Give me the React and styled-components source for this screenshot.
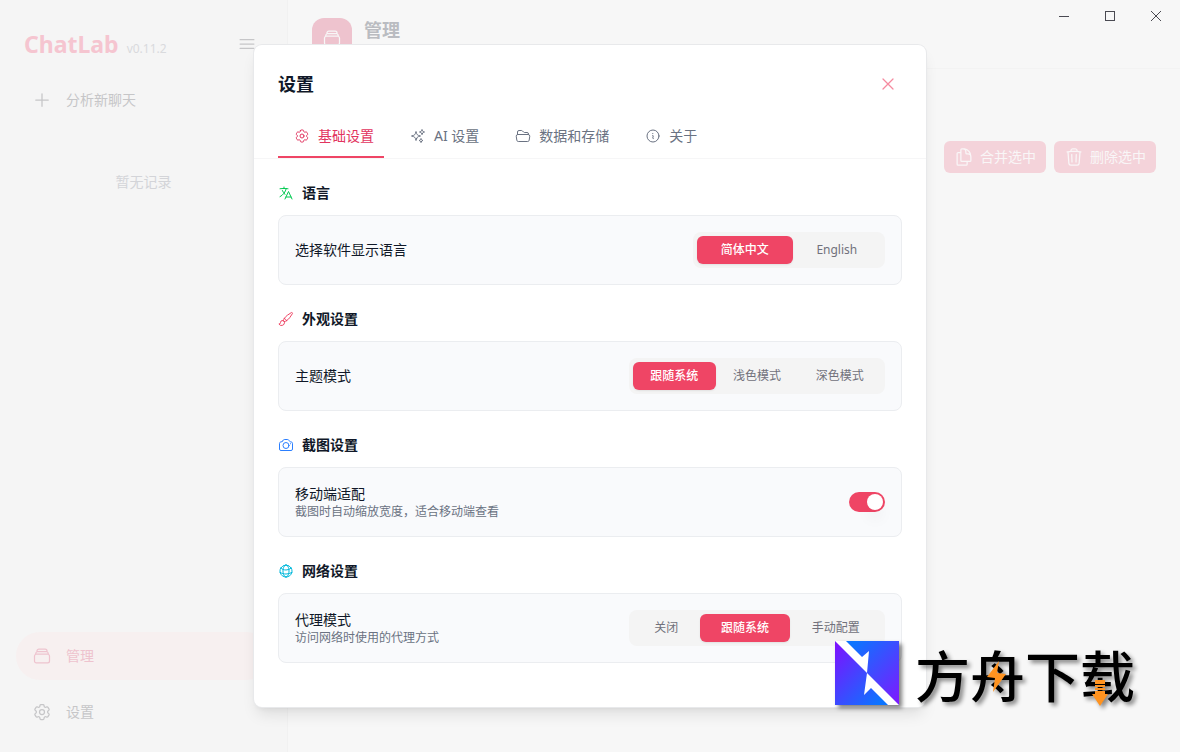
import { useState } from "react";
import styled, { createGlobalStyle } from "styled-components";
import {
  HiOutlineBars3,
  HiOutlineCamera,
  HiOutlineCog6Tooth,
  HiOutlineDocumentDuplicate,
  HiOutlineFolderOpen,
  HiOutlineGlobeAlt,
  HiOutlineInformationCircle,
  HiOutlineLanguage,
  HiOutlinePaintBrush,
  HiOutlinePlus,
  HiOutlineRectangleStack,
  HiOutlineSparkles,
  HiOutlineTrash,
  HiOutlineXMark,
} from "react-icons/hi2";

const GlobalStyle = createGlobalStyle`
  *,
  *::before,
  *::after {
    box-sizing: border-box;
  }

  body {
    margin: 0;
    background-color: #f7f7f7;
    font-family: "Noto Sans", "Noto Sans CJK SC", sans-serif;
    font-size: 14px;
    line-height: 20px;
  }

  h1,
  h2,
  h3,
  p {
    margin: 0;
  }

  button {
    padding: 0;
    border: none;
    background: none;
    color: inherit;
    font: inherit;
    cursor: pointer;
  }

  svg {
    display: block;
    flex-shrink: 0;
  }
`;

/* ---------- page behind the dialog ---------- */

const StyledApp = styled.div`
  position: relative;
  display: flex;
  min-height: 100vh;
`;

const StyledSidebar = styled.aside`
  display: flex;
  flex-direction: column;
  flex: 0 0 288px;
  padding: 28px 0 16px;
  border-right: 1px solid #f1f1f1;
  background-color: #f5f5f5;
`;

const StyledBrandRow = styled.div`
  display: flex;
  align-items: center;
  justify-content: space-between;
  height: 32px;
  padding: 0 24px;
`;

const StyledBrand = styled.h1`
  display: flex;
  align-items: baseline;
  gap: 8px;
  color: #f5c5d0;
  font-size: 23px;
  font-weight: 700;
  line-height: 32px;
`;

const StyledVersion = styled.span`
  color: #d9dadd;
  font-size: 12px;
  font-weight: 400;
  line-height: 16px;
`;

const StyledMenuButton = styled.button`
  display: grid;
  place-items: center;
  width: 32px;
  height: 32px;
  color: #c6c6c8;
`;

const StyledNav = styled.nav`
  display: flex;
  flex-direction: column;
  gap: 8px;
  padding: ${(props) => (props.$top ? "16px 16px 0" : "0 16px")};
`;

const StyledNavItem = styled.button`
  display: flex;
  align-items: center;
  gap: 14px;
  height: 48px;
  padding: 0 16px;
  border-radius: 24px;
  background-color: ${(props) => (props.$active ? "#f7f0f0" : "transparent")};
  color: ${(props) => (props.$active ? "#eec3ce" : "#c6c6c8")};
`;

const StyledEmpty = styled.p`
  flex: 1;
  padding-top: 48px;
  color: #d3d4d8;
  text-align: center;
`;

const StyledMain = styled.main`
  flex: 1;
  min-width: 0;
`;

const StyledPageHeader = styled.header`
  display: flex;
  gap: 12px;
  padding: 18px 24px 10px;
  border-bottom: 1px solid #f3f3f3;
`;

const StyledPageIcon = styled.span`
  display: grid;
  place-items: center;
  width: 40px;
  height: 40px;
  border-radius: 12px;
  background-color: #eec3ce;
  color: #f7f7f7;
`;

const StyledPageTitle = styled.h2`
  color: #babcc1;
  font-size: 18px;
  font-weight: 700;
  line-height: 24px;
`;

const StyledToolbar = styled.div`
  display: flex;
  justify-content: flex-end;
  gap: 8px;
  padding: 72px 24px 0;
`;

const StyledToolbarButton = styled.button`
  display: flex;
  align-items: center;
  gap: 6px;
  height: 32px;
  padding: 0 10px;
  border-radius: 6px;
  background-color: #f4d3da;
  color: #f9f6f7;
`;

const StyledWindowControls = styled.div`
  position: absolute;
  top: 0;
  right: 0;
  display: flex;
  padding-right: 1px;
`;

const StyledWindowButton = styled.button`
  display: grid;
  place-items: center;
  width: 46px;
  height: 32px;
  color: #4a4a52;
`;

/* ---------- settings dialog ---------- */

const StyledOverlay = styled.div`
  position: absolute;
  inset: 0;
  display: flex;
  align-items: center;
  justify-content: center;
  pointer-events: none;
`;

const StyledDialog = styled.section`
  width: 100%;
  max-width: 672px;
  min-height: 662px;
  border-radius: 8px;
  background-color: #fff;
  box-shadow:
    0 0 0 1px #e8e9eb,
    0 10px 15px -3px rgba(0, 0, 0, 0.1),
    0 4px 6px -4px rgba(0, 0, 0, 0.1);
  pointer-events: auto;
`;

const StyledDialogHeader = styled.header`
  padding: 25px 24px 0;
  border-bottom: 1px solid #f6f6f7;
`;

const StyledTitleRow = styled.div`
  display: flex;
  align-items: center;
  justify-content: space-between;
  margin-bottom: 16px;
`;

const StyledDialogTitle = styled.h2`
  color: #101828;
  font-size: 18px;
  font-weight: 700;
  line-height: 28px;
`;

const StyledCloseButton = styled.button`
  display: grid;
  place-items: center;
  width: 28px;
  height: 28px;
  color: #f58a9f;
`;

const StyledTabs = styled.div`
  display: flex;
  gap: 10px;
`;

const StyledTab = styled.button`
  display: flex;
  align-items: center;
  gap: 8px;
  padding: 12px 10px 10px 16px;
  border-bottom: 2px solid ${(props) => (props.$active ? "#ef4565" : "transparent")};
  color: ${(props) => (props.$active ? "#e23560" : "#6a7282")};
`;

const StyledDialogBody = styled.div`
  display: flex;
  flex-direction: column;
  gap: 24px;
  padding: 24px;
`;

const StyledSection = styled.section`
  display: flex;
  flex-direction: column;
  gap: 12px;
`;

const StyledSectionTitle = styled.h3`
  display: flex;
  align-items: center;
  gap: 8px;
  color: #101828;
  font-size: 14px;
  font-weight: 700;

  svg {
    color: ${(props) => props.$iconColor};
  }
`;

const StyledCard = styled.div`
  display: flex;
  align-items: center;
  justify-content: space-between;
  min-height: 70px;
  padding: 16px;
  border: 1px solid #ebedf0;
  border-radius: 8px;
  background-color: #f9fafc;
`;

const StyledLabel = styled.label`
  display: block;
  color: #101828;
`;

const StyledHint = styled.p`
  color: #6a7282;
  font-size: 12px;
  line-height: 16px;
`;

const StyledSegments = styled.div`
  display: flex;
  width: ${(props) => (props.$wide ? 256 : 192)}px;
  padding: 4px;
  border-radius: 8px;
  background-color: #f4f4f4;
`;

const StyledSegment = styled.button`
  flex: 1 1 auto;
  height: 28px;
  border-radius: 6px;
  background-color: ${(props) => (props.$active ? "#ef4565" : "transparent")};
  box-shadow: ${(props) => (props.$active ? "0 1px 2px rgba(0, 0, 0, 0.08)" : "none")};
  color: ${(props) => (props.$active ? "#fff" : "#71717b")};
  font-size: 12px;
  font-weight: ${(props) => (props.$active ? 500 : 400)};
`;

const StyledSwitch = styled.input`
  appearance: none;
  width: 36px;
  height: 20px;
  margin: 0;
  padding: 2px;
  border-radius: 10px;
  background-color: #d4d4d8;
  cursor: pointer;

  &::before {
    content: "";
    display: block;
    width: 16px;
    height: 16px;
    border-radius: 50%;
    background-color: #fff;
    box-shadow: 0 10px 15px -3px rgba(0, 0, 0, 0.1);
  }

  &:checked {
    background-color: #ef4565;
  }

  &:checked::before {
    margin-left: 16px;
  }
`;

/* ---------- site badge in the corner ---------- */

const StyledBadge = styled.div`
  position: absolute;
  right: 45px;
  bottom: 47px;
  display: flex;
  align-items: center;
  gap: 16px;
`;

const StyledBadgeLogo = styled.svg`
  filter: drop-shadow(3px 3px 2px rgba(0, 0, 0, 0.5));
`;

const StyledBadgeName = styled.div`
  position: relative;
  color: #000;
  font-family: "Noto Sans CJK SC", sans-serif;
  font-size: 55px;
  font-weight: 500;
  line-height: 64px;
  white-space: nowrap;
  filter: drop-shadow(3px 3px 2px rgba(0, 0, 0, 0.45));
`;

const StyledBadgeMarks = styled.svg`
  position: absolute;
  top: 0;
  left: 0;
`;

const tabs = [
  { name: "基础设置", Icon: HiOutlineCog6Tooth },
  { name: "AI 设置", Icon: HiOutlineSparkles },
  { name: "数据和存储", Icon: HiOutlineFolderOpen },
  { name: "关于", Icon: HiOutlineInformationCircle },
];

const sections = [
  {
    id: "language",
    title: "语言",
    Icon: HiOutlineLanguage,
    iconColor: "#00c950",
    label: "选择软件显示语言",
    options: ["简体中文", "English"],
    initial: "简体中文",
  },
  {
    id: "theme",
    title: "外观设置",
    Icon: HiOutlinePaintBrush,
    iconColor: "#ef4565",
    label: "主题模式",
    options: ["跟随系统", "浅色模式", "深色模式"],
    initial: "跟随系统",
  },
  {
    id: "screenshot",
    title: "截图设置",
    Icon: HiOutlineCamera,
    iconColor: "#2b7fff",
    label: "移动端适配",
    hint: "截图时自动缩放宽度，适合移动端查看",
  },
  {
    id: "proxy",
    title: "网络设置",
    Icon: HiOutlineGlobeAlt,
    iconColor: "#00b8db",
    label: "代理模式",
    hint: "访问网络时使用的代理方式",
    options: ["关闭", "跟随系统", "手动配置"],
    initial: "跟随系统",
  },
];

function Segments({ labelId, options, initial }) {
  const [value, setValue] = useState(initial);

  return (
    <StyledSegments
      role="group"
      aria-labelledby={labelId}
      $wide={options.length > 2}
    >
      {options.map((option) => (
        <StyledSegment
          key={option}
          type="button"
          aria-pressed={option === value}
          $active={option === value}
          onClick={() => setValue(option)}
        >
          {option}
        </StyledSegment>
      ))}
    </StyledSegments>
  );
}

function SettingSection({ section }) {
  const { id, title, Icon, iconColor, label, hint, options, initial } = section;

  return (
    <StyledSection>
      <StyledSectionTitle $iconColor={iconColor}>
        <Icon size={16} />
        {title}
      </StyledSectionTitle>
      <StyledCard>
        <div>
          <StyledLabel
            as={options ? "p" : "label"}
            id={`${id}-label`}
            htmlFor={options ? undefined : id}
          >
            {label}
          </StyledLabel>
          {hint && <StyledHint>{hint}</StyledHint>}
        </div>
        {options ? (
          <Segments
            labelId={`${id}-label`}
            options={options}
            initial={initial}
          />
        ) : (
          <StyledSwitch id={id} type="checkbox" role="switch" defaultChecked />
        )}
      </StyledCard>
    </StyledSection>
  );
}

function SettingsDialog() {
  const [activeTab, setActiveTab] = useState("基础设置");

  return (
    <StyledOverlay>
      <StyledDialog role="dialog" aria-labelledby="dialog-title">
        <StyledDialogHeader>
          <StyledTitleRow>
            <StyledDialogTitle id="dialog-title">设置</StyledDialogTitle>
            <StyledCloseButton type="button" aria-label="关闭">
              <HiOutlineXMark size={20} />
            </StyledCloseButton>
          </StyledTitleRow>
          <StyledTabs role="tablist">
            {tabs.map(({ name, Icon }) => (
              <StyledTab
                key={name}
                type="button"
                role="tab"
                aria-selected={name === activeTab}
                $active={name === activeTab}
                onClick={() => setActiveTab(name)}
              >
                <Icon size={16} />
                {name}
              </StyledTab>
            ))}
          </StyledTabs>
        </StyledDialogHeader>
        <StyledDialogBody>
          {sections.map((section) => (
            <SettingSection key={section.id} section={section} />
          ))}
        </StyledDialogBody>
      </StyledDialog>
    </StyledOverlay>
  );
}

function Sidebar() {
  return (
    <StyledSidebar>
      <StyledBrandRow>
        <StyledBrand>
          ChatLab <StyledVersion>v0.11.2</StyledVersion>
        </StyledBrand>
        <StyledMenuButton type="button" aria-label="菜单">
          <HiOutlineBars3 size={20} />
        </StyledMenuButton>
      </StyledBrandRow>
      <StyledNav $top>
        <StyledNavItem type="button">
          <HiOutlinePlus size={20} />
          分析新聊天
        </StyledNavItem>
      </StyledNav>
      <StyledEmpty>暂无记录</StyledEmpty>
      <StyledNav>
        <StyledNavItem type="button" $active>
          <HiOutlineRectangleStack size={20} />
          管理
        </StyledNavItem>
        <StyledNavItem type="button">
          <HiOutlineCog6Tooth size={20} />
          设置
        </StyledNavItem>
      </StyledNav>
    </StyledSidebar>
  );
}

function WindowControls() {
  return (
    <StyledWindowControls>
      <StyledWindowButton type="button" aria-label="最小化">
        <svg width="10" height="10" stroke="currentColor">
          <path d="M0 5.5h10" />
        </svg>
      </StyledWindowButton>
      <StyledWindowButton type="button" aria-label="最大化">
        <svg width="10" height="10" fill="none" stroke="currentColor">
          <rect x="0.5" y="0.5" width="9" height="9" />
        </svg>
      </StyledWindowButton>
      <StyledWindowButton type="button" aria-label="关闭窗口">
        <svg width="10" height="10" stroke="currentColor">
          <path d="M0 0l10 10M10 0L0 10" />
        </svg>
      </StyledWindowButton>
    </StyledWindowControls>
  );
}

function SiteBadge() {
  return (
    <StyledBadge>
      <StyledBadgeLogo width="64" height="64" viewBox="0 0 64 64">
        <defs>
          <linearGradient id="upper" x1="0.2" y1="0" x2="1" y2="0.9">
            <stop offset="0" stopColor="#0c74ff" />
            <stop offset="1" stopColor="#7a1cff" />
          </linearGradient>
          <linearGradient id="lower" x1="0" y1="0.1" x2="0.8" y2="1">
            <stop offset="0" stopColor="#7a14ff" />
            <stop offset="1" stopColor="#0c74ff" />
          </linearGradient>
        </defs>
        <path fill="#fff" d="M0 0h64v64H0z" />
        <path fill="url(#upper)" d="M11 0h53v64L32 32l2-22-7 6z" />
        <path fill="url(#lower)" d="M0 0l32 32-3 22 7-7 17 17H0z" />
      </StyledBadgeLogo>
      <StyledBadgeName>
        方舟下载
        <StyledBadgeMarks width="220" height="66" viewBox="0 0 220 66" fill="#ff9320">
          <path d="M84 20L72 36l8 1-2 14 13-18-9-1z" />
          <path d="M180 39h10v4h-10zM180 44h10v2h-10zM180 47h10v2h-10zM180 50h10v3h3l-8 12-8-12h3z" />
        </StyledBadgeMarks>
      </StyledBadgeName>
    </StyledBadge>
  );
}

export default function App() {
  return (
    <StyledApp>
      <GlobalStyle />
      <Sidebar />
      <StyledMain>
        <StyledPageHeader>
          <StyledPageIcon>
            <HiOutlineRectangleStack size={20} />
          </StyledPageIcon>
          <StyledPageTitle>管理</StyledPageTitle>
        </StyledPageHeader>
        <StyledToolbar>
          <StyledToolbarButton type="button">
            <HiOutlineDocumentDuplicate size={20} />
            合并选中
          </StyledToolbarButton>
          <StyledToolbarButton type="button">
            <HiOutlineTrash size={20} />
            删除选中
          </StyledToolbarButton>
        </StyledToolbar>
      </StyledMain>
      <SettingsDialog />
      <WindowControls />
      <SiteBadge />
    </StyledApp>
  );
}
